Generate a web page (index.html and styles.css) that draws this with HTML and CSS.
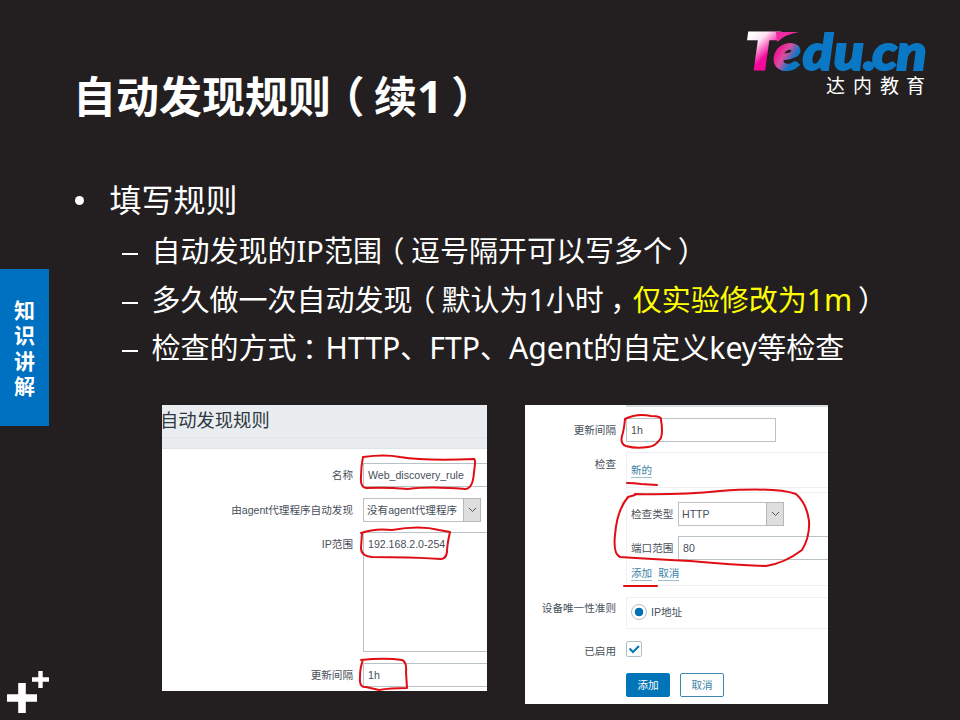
FILE: index.html
```html
<!DOCTYPE html>
<html lang="zh-CN">
<head>
<meta charset="utf-8">
<title>自动发现规则（续1）</title>
<link rel="stylesheet" href="styles.css">
</head>
<body>
<div class="slide">
  <aside class="rail">
    <div class="tab"><span>知</span><span>识</span><span>讲</span><span>解</span></div>
    <svg class="plus" width="49" height="49" viewBox="0 0 49 49"><path d="M22 12v30M7 27h30" stroke="#fff" stroke-width="7.6"/><path d="M40.5 0v17M32 8.5h17" stroke="#fff" stroke-width="4.4"/></svg>
  </aside>
  <main class="main">
    <header class="head">
      <h1>自动发现规则<span class="po">（</span>续<span class="lat">1</span><span class="pc">）</span></h1>
      <svg class="logo" width="190" height="80" viewBox="745 25 190 80">
        <defs>
          <linearGradient id="t" gradientUnits="userSpaceOnUse" x1="6" y1="-37" x2="30" y2="-14"><stop offset="0" stop-color="#fff"/><stop offset=".3" stop-color="#fde3f3"/><stop offset=".75" stop-color="#f5089c"/><stop offset="1" stop-color="#f5089c"/></linearGradient>
          <linearGradient id="e" gradientUnits="userSpaceOnUse" x1="2" y1="-18" x2="24" y2="-6"><stop offset="0" stop-color="#f0188f"/><stop offset=".3" stop-color="#d84fa0"/><stop offset=".65" stop-color="#0a78c4"/><stop offset="1" stop-color="#0a78c4"/></linearGradient>
        </defs>
        <text class="brand wide" transform="translate(746 69) scale(1.12 1)" x="0" y="0" font-size="50" fill="url(#t)" stroke="url(#t)">T</text>
        <path d="M776 32h23q-13 2-22 10z" fill="#ee2ba2"/>
        <text class="brand" transform="translate(775 69.500) scale(1.13 1)" x="-1 24.500 52 78 86 107.500" y="0" font-size="49" fill="#0a78c4" stroke="#0a78c4"><tspan fill="url(#e)" stroke="url(#e)">e</tspan>du.cn</text>
        <text class="sub" x="826 853 880 906" y="93" font-size="19" fill="#fff">达内教育</text>
      </svg>
    </header>
    <section class="points">
      <h2><i class="dot"></i>填写规则</h2>
      <ul>
        <li>自动发现的IP范围<span class="po">（</span>逗号隔开可以写多个<span class="pc">）</span></li>
        <li>多久做一次自动发现<span class="po">（</span>默认为<span class="lat">1</span>小时<span class="comma">，</span><em>仅实验修改为<span class="lat">1m</span></em><span class="pc">）</span></li>
        <li>检查的方式<span class="colon">：</span><span class="lat">HTTP</span>、<span class="lat">FTP</span>、<span class="lat">Agent</span>的自定义<span class="lat">key</span>等检查</li>
      </ul>
    </section>
    <section class="shots">
      <div class="shot left">
        <div class="bar"><b>自动发现规则</b></div>
        <div class="form">
          <label>名称</label><div class="box open">Web_discovery_rule</div>
          <label>由agent代理程序自动发现</label><div class="box select s1">没有agent代理程序<i><svg width="9" height="6" viewBox="0 0 9 6"><path d="M1 1l3.500 3.500L8 1"/></svg></i></div>
          <label>IP范围</label><div class="box open area">192.168.2.0-254</div>
          <label>更新间隔</label><div class="box open">1h</div>
        </div>
        <svg class="ink" width="325" height="286" viewBox="162 405 325 286"><path d="M363 457Q385 454 400 457Q425 461 474 459Q476 459 474 472Q473 489 465 489Q430 486 408 489Q385 487 366 488Q360 487 361 477Q361 466 363 457M361 533Q375 528 392 530Q420 525 439 530L450 532Q447 545 447 552Q446 559 441 559Q410 557 372 557Q361 556 361 548L362 533M361 660L372 659Q390 658 402 660Q407 662 406 672L407 688Q390 688 379 690Q370 688 366 687Q359 688 360 677Q360 667 363 660"/></svg>
      </div>
      <div class="shot right">
        <div class="edge"></div>
        <div class="form">
          <label>更新间隔</label><div class="box short">1h</div>
          <label class="l2">检查</label><div class="set g1"><a>新的</a></div>
          <div class="set g2">
            <div class="line"><span>检查类型</span><div class="box select s2">HTTP<i><svg width="9" height="6" viewBox="0 0 9 6"><path d="M1 1l3.500 3.500L8 1"/></svg></i></div></div>
            <div class="line"><span>端口范围</span><div class="box open grow">80</div></div>
            <div class="links"><a>添加</a><a>取消</a></div>
          </div>
          <label class="l3">设备唯一性准则</label><div class="set g3"><i class="radio"></i>IP地址</div>
          <label class="l4">已启用</label><div class="check"><svg width="14" height="14" viewBox="0 0 14 14"><path d="M2.500 6.500l3.500 3.500l6-6"/></svg></div>
          <div class="buttons"><button class="solid">添加</button><button>取消</button></div>
        </div>
        <svg class="ink" width="303" height="299" viewBox="525 405 303 299"><path d="M625 419Q637 413 651 416Q662 416 661 420Q663 431 661 438Q655 447 648 447Q636 449 626 446Q620 444 622 436Q624 430 625 419M627 483Q634 483 641 484L657 485M635 494Q680 495 720 491Q775 487 796 494Q807 504 809 521Q810 537 802 550Q785 563 766 566Q735 565 690 561Q650 559 620 557Q613 554 615 535Q617 510 628 497L635 495M624 586L657 586"/></svg>
      </div>
    </section>
  </main>
</div>
</body>
</html>
```
FILE: styles.css
```css
* { box-sizing: border-box; }
body { margin: 0; background: #231f20; }
.slide { display: grid; grid-template-columns: 49px 1fr; width: 960px; height: 720px; overflow: hidden; background: #231f20; color: #fff; font-family: "Noto Sans", "Noto Sans CJK SC", sans-serif; }
.rail { display: flex; flex-direction: column; padding-top: 269px; }
.tab { height: 157px; background: #0070c0; display: flex; flex-direction: column; align-items: center; justify-content: center; font-size: 21px; font-weight: 700; line-height: 25.5px; padding-top: 2px; }
.plus { margin-top: 245px; }
.main { display: flex; flex-direction: column; min-width: 0; }
.head { display: flex; height: 170px; padding: 25px 25px 0 24px; justify-content: space-between; }
h1 { margin: 41px 0 0; font-size: 43px; line-height: 60px; height: 60px; font-weight: 700; white-space: nowrap; }
.po, .pc, .colon, .comma { display: inline-block; }
.po { transform: translateX(-.22em); }
.pc { transform: translateX(.2em); }
.colon { transform: translateX(.2em); }
.comma { transform: translateX(.22em); }
.lat { font-size: 1.04em; }
.brand { font-family: Lato, sans-serif; font-weight: 900; font-style: italic; stroke-width: 2px; }
.wide { stroke-width: 3px; }
.logo { overflow: visible; }
.sub { font-family: "Noto Sans CJK SC", sans-serif; }
.points { height: 235px; padding: 5px 0 0 26px; }
h2 { margin: 0; display: flex; align-items: center; font-size: 32px; line-height: 50px; height: 50px; font-weight: 400; }
.dot { width: 9px; height: 9px; border-radius: 50%; background: #fff; margin-right: 25.500px; }
ul { list-style: none; margin: 0; padding: 2px 0 0 47px; }
li { display: flex; align-items: center; height: 48.500px; font-size: 29px; line-height: 48px; white-space: nowrap; }
li::before { content: ""; width: 16px; height: 2px; background: #fff; margin-right: 13.500px; position: relative; top: 3px; }
em { font-style: normal; color: #ff0; }
.shots { display: flex; align-items: flex-start; gap: 38px; padding-left: 113px; }
.shot { position: relative; overflow: hidden; background: #fff; color: #47505a; font: 10.600px/14px "Liberation Sans", "Noto Sans CJK SC", sans-serif; white-space: nowrap; }
.left { width: 325px; height: 286px; }
.right { width: 303px; height: 299px; }
.bar { height: 44px; background: #e9edf0; border-bottom: 1px solid #dfe4e8; }
.bar b { display: block; height: 33px; line-height: 32px; border-bottom: 1px solid #dfe4e8; font-size: 18.300px; font-weight: 400; color: #2f3942; text-indent: -2px; }
.form { display: grid; column-gap: 10px; }
.left .form { grid-template: 24px 24px 120px 24px / 191px 1fr; row-gap: 10.500px; padding-top: 14px; }
label { text-align: right; line-height: 24px; }
.box { border: 1px solid #b9c3c7; height: 24px; line-height: 22px; padding-left: 3px; background: #fff; }
.open { border-right: 0; padding-left: 4px; }
.area { height: 120px; }
.select { display: flex; justify-content: space-between; }
.select i { display: grid; place-items: center; width: 18px; background: #dedede; border: 1px solid #b4b8bb; margin: -1px; }
.select svg { fill: none; stroke: #555; }
.s1 { width: 118px; }
.s2 { width: 106px; }
.ink { position: absolute; left: 0; top: 0; fill: none; stroke: #e00d15; stroke-width: 2; stroke-linecap: round; stroke-linejoin: round; }
.edge { height: 2px; margin-left: 101px; background: #d7dde0; }
.right .form { grid-template: 24px 46px 98px 43px 29px 39px / 91px 1fr; padding-top: 11px; }
.short { width: 150px; padding-left: 4px; }
.set { border: 1px solid #eef1f2; border-right: 0; padding-left: 4px; }
.l2, .g1 { margin-top: 10px; }
.g1 { padding-top: 10px; height: 36px; }
.g2, .check, .buttons { grid-column: 2; }
.g2 { margin-top: 4px; height: 94px; padding-top: 9px; display: flex; flex-direction: column; gap: 10px; }
.line { display: flex; line-height: 24px; }
.line span { width: 47px; }
.grow { flex: 1; }
.links { display: flex; gap: 6px; margin-top: -4px; }
a { color: #3b7fa5; height: 15px; border-bottom: 1px solid #9cc0cf; align-self: flex-start; display: inline-block; }
.l3 { margin-top: 10px; }
.g3 { margin-top: 11px; height: 32px; padding-bottom: 2px; display: flex; align-items: center; gap: 4px; }
.radio { width: 16px; height: 16px; border: 1px solid #b0bec5; border-radius: 50%; background: radial-gradient(circle, #0070b5 4px, #fff 4.600px); }
.l4 { grid-column: 1; margin-top: 10px; }
.check { width: 16px; height: 16px; border: 1px solid #b0bec5; border-radius: 2px; margin-top: 12px; }
.check svg { display: block; fill: none; stroke: #0275b8; stroke-width: 2; }
.buttons { display: flex; gap: 10px; padding-top: 15px; }
button { width: 44px; height: 24px; padding: 0; border: 1px solid #3b87b0; border-radius: 2px; background: #fff; color: #3b7fa5; font: inherit; }
.solid { background: #0275b8; border-color: #0275b8; color: #fff; }
```
